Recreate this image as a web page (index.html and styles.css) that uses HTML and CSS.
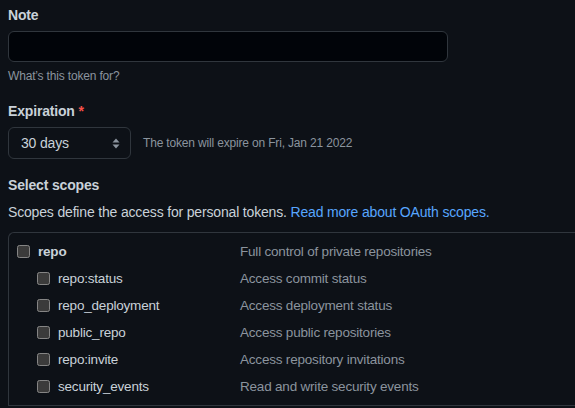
FILE: index.html
```html
<!DOCTYPE html>
<html lang="en">
<head>
<meta charset="utf-8">
<title>New personal access token</title>
<link rel="stylesheet" href="styles.css">
</head>
<body>
<main class="page">
  <div class="field">
    <label class="label" for="note">Note</label>
    <input class="input" id="note" type="text">
    <p class="hint">What’s this token for?</p>
  </div>

  <div class="field field-exp">
    <div class="label">Expiration <span class="req">*</span></div>
    <div class="exp-row">
      <div class="select">
        <span>30 days</span>
        <svg class="select-arrows" width="8" height="11" viewBox="0 0 8 11" aria-hidden="true">
          <path d="M4 0.5 L7.5 4.5 L0.5 4.5 Z" fill="#8b949e"/>
          <path d="M4 10.5 L7.5 6.5 L0.5 6.5 Z" fill="#8b949e"/>
        </svg>
      </div>
      <span class="exp-note">The token will expire on Fri, Jan 21 2022</span>
    </div>
  </div>

  <div class="scopes">
    <div class="label">Select scopes</div>
    <p class="scopes-desc">Scopes define the access for personal tokens. <a class="link" href="#">Read more about OAuth scopes.</a></p>

    <div class="scope-box">
      <div class="scope-group">
        <div class="scope-row">
          <label class="scope-name parent"><input type="checkbox" class="cb"><span>repo</span></label>
          <span class="scope-text">Full control of private repositories</span>
        </div>
        <div class="scope-row">
          <label class="scope-name child"><input type="checkbox" class="cb"><span>repo:status</span></label>
          <span class="scope-text">Access commit status</span>
        </div>
        <div class="scope-row">
          <label class="scope-name child"><input type="checkbox" class="cb"><span>repo_deployment</span></label>
          <span class="scope-text">Access deployment status</span>
        </div>
        <div class="scope-row">
          <label class="scope-name child"><input type="checkbox" class="cb"><span>public_repo</span></label>
          <span class="scope-text">Access public repositories</span>
        </div>
        <div class="scope-row">
          <label class="scope-name child"><input type="checkbox" class="cb"><span>repo:invite</span></label>
          <span class="scope-text">Access repository invitations</span>
        </div>
        <div class="scope-row">
          <label class="scope-name child"><input type="checkbox" class="cb"><span>security_events</span></label>
          <span class="scope-text">Read and write security events</span>
        </div>
      </div>
    </div>
  </div>
</main>
</body>
</html>
```

FILE: styles.css
```css
html, body {
  margin: 0;
  padding: 0;
  background: #0d1117;
  overflow: hidden;
  color-scheme: dark;
}

body {
  font-family: "Liberation Sans", Arial, sans-serif;
  font-size: 14px;
  line-height: 20px;
  letter-spacing: -0.17px;
  color: #c9d1d9;
}

.page {
  padding: 5px 8px 0;
}

.label {
  display: block;
  font-weight: 700;
  font-size: 14px;
  line-height: 20px;
  color: #c9d1d9;
  margin-bottom: 6px;
}

.req {
  color: #f85149;
}

.input {
  display: block;
  box-sizing: border-box;
  width: 440px;
  height: 31px;
  margin: 0;
  padding: 5px 12px;
  background: #010409;
  border: 1px solid #30363d;
  border-radius: 6px;
  color: #c9d1d9;
  font: inherit;
  outline: none;
}

.hint {
  margin: 5px 0 0;
  font-size: 12px;
  line-height: 18px;
  color: #8b949e;
}

.field-exp {
  margin-top: 16px;
}

.exp-row {
  display: flex;
  align-items: center;
  gap: 12px;
}

.select {
  box-sizing: border-box;
  width: 123px;
  height: 32px;
  padding: 0 10px 0 12px;
  display: flex;
  align-items: center;
  justify-content: space-between;
  background: #0d1117;
  border: 1px solid #30363d;
  border-radius: 6px;
  color: #c9d1d9;
}

.select-arrows {
  display: block;
}

.exp-note {
  font-size: 12px;
  line-height: 18px;
  color: #8b949e;
}

.scopes {
  margin-top: 16px;
}

.scopes .label {
  margin-bottom: 7px;
}

.scopes-desc {
  margin: 0 0 10px;
}

.link {
  color: #58a6ff;
  text-decoration: none;
}

.scope-box {
  width: 575px;
  border-top: 1px solid #30363d;
  border-left: 1px solid #30363d;
  border-top-left-radius: 6px;
}

.scope-group {
  display: flex;
  flex-direction: column;
  gap: 7px;
  padding: 9px 0 8px 8px;
  border-bottom: 1px solid #30363d;
}

.scope-row {
  display: grid;
  grid-template-columns: 223px 1fr;
  align-items: center;
  height: 20px;
  font-size: 13.5px;
  letter-spacing: -0.2px;
}

.scope-name {
  display: flex;
  align-items: center;
  gap: 8px;
  color: #c9d1d9;
}

.scope-name.parent {
  font-weight: 700;
}

.scope-name.child {
  padding-left: 20px;
}

.cb {
  width: 13px;
  height: 13px;
  margin: 0;
  position: relative;
  top: -1px;
}

.scope-text {
  color: #8b949e;
}
```
